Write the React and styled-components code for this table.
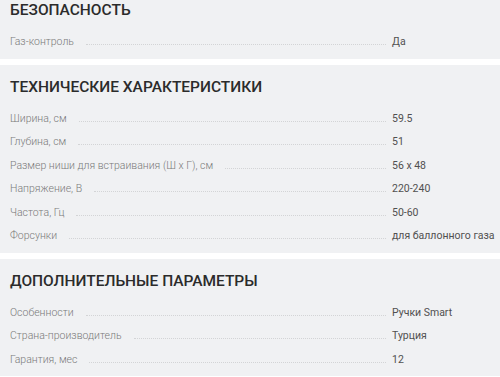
import styled, { createGlobalStyle } from "styled-components";

const GlobalStyle = createGlobalStyle`
  html, body {
    margin: 0;
    padding: 0;
    background: #ffffff;
    font-family: Roboto, "Liberation Sans", sans-serif;
    overflow: hidden;
  }
`;

const Page = styled.div`
  display: flex;
  flex-direction: column;
  gap: 6px;
  margin-top: -12px;
`;

const Section = styled.section`
  background: #f0f1f3;
  padding: 13px 0 0 10px;
`;

const Title = styled.h2`
  margin: 0 0 16px;
  font-size: 15.5px;
  line-height: 18px;
  font-weight: 500;
  color: #2b2b2b;
  text-transform: uppercase;
`;

const Row = styled.div`
  display: flex;
  align-items: baseline;
  height: 23.5px;
  font-size: 10.5px;
  line-height: 14px;
`;

const Label = styled.span`
  color: #7a7a7a;
  font-weight: 300;
  white-space: nowrap;
`;

// dotted leader between the name and its value
const Leader = styled.span`
  flex: 1;
  margin: 0 6px 1px 12px;
  border-bottom: 1px dotted #d3d4d6;
`;

const Value = styled.span`
  width: 108px;
  color: #505050;
  white-space: nowrap;
`;

const sections = [
  {
    title: "Безопасность",
    rows: [["Газ-контроль", "Да"]],
  },
  {
    title: "Технические характеристики",
    rows: [
      ["Ширина, см", "59.5"],
      ["Глубина, см", "51"],
      ["Размер ниши для встраивания (Ш x Г), см", "56 x 48"],
      ["Напряжение, В", "220-240"],
      ["Частота, Гц", "50-60"],
      ["Форсунки", "для баллонного газа"],
    ],
  },
  {
    title: "Дополнительные параметры",
    rows: [
      ["Особенности", "Ручки Smart"],
      ["Страна-производитель", "Турция"],
      ["Гарантия, мес", "12"],
    ],
  },
];

function SpecRow({ label, value }) {
  return (
    <Row>
      <Label>{label}</Label>
      <Leader />
      <Value>{value}</Value>
    </Row>
  );
}

export default function App() {
  return (
    <>
      <GlobalStyle />
      <Page>
        {sections.map((s) => (
          <Section key={s.title}>
            <Title>{s.title}</Title>
            {s.rows.map(([label, value]) => (
              <SpecRow key={label} label={label} value={value} />
            ))}
          </Section>
        ))}
      </Page>
    </>
  );
}
